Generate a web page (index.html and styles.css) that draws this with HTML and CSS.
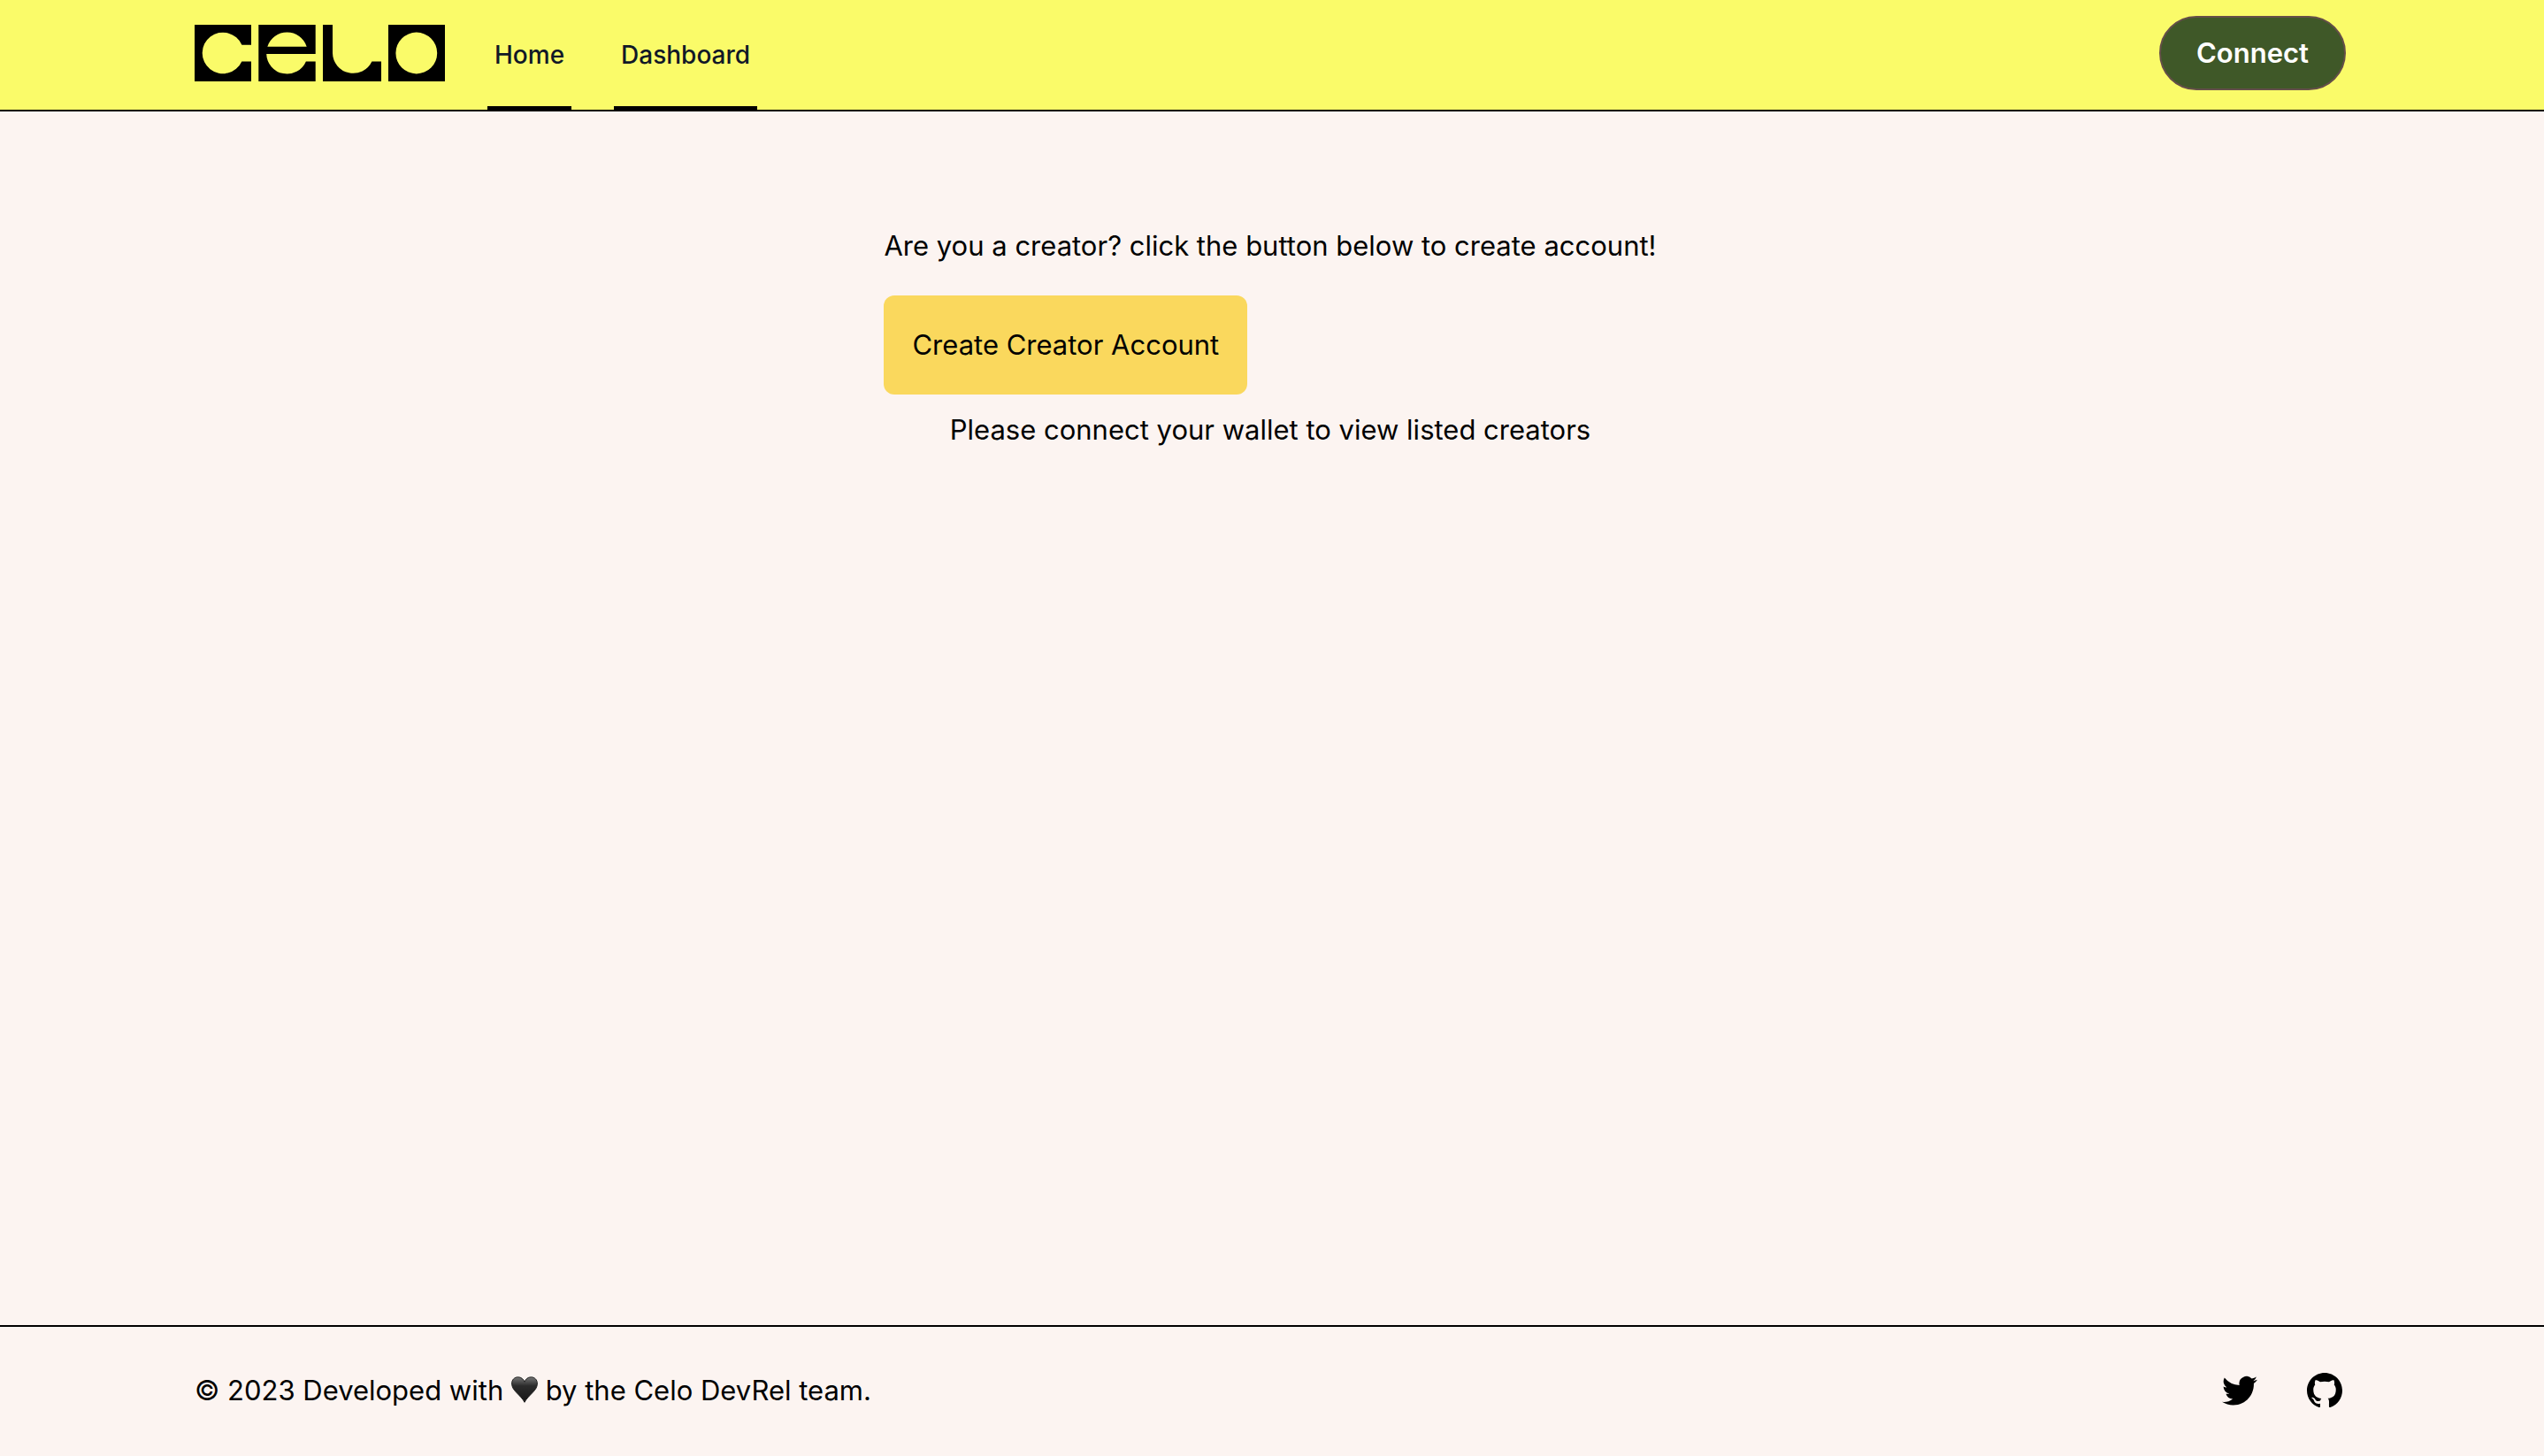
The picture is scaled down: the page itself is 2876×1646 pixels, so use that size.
FILE: index.html
```html
<!DOCTYPE html>
<html lang="en">
<head>
<meta charset="utf-8">
<meta name="viewport" content="width=device-width, initial-scale=1">
<title>Celo Creators</title>
<link rel="stylesheet" href="styles.css">
</head>
<body>
<header class="header">
  <a class="logo" href="#" aria-label="Celo">
    <svg class="logo-mark" viewBox="0 0 283 64" fill="currentColor" aria-hidden="true">
      <path d="M0 0H64V22.7H53.4A23.3 23.3 0 1 0 53.3 41.4H64V64H0Z"/>
      <path fill-rule="evenodd" d="M72.3 0H136.7V33H81.2A23.3 23.3 0 0 0 125.9 41.4H136.7V64H72.3ZM82.3 24.8H126.7A23.3 23.3 0 0 0 82.3 24.8Z"/>
      <path d="M145 0H156V32A23.3 23.3 0 0 0 200.4 41.4H211V64H145Z"/>
      <path fill-rule="evenodd" d="M219 0H283V64H219ZM227.4 32A23.4 23.4 0 1 0 274.2 32A23.4 23.4 0 1 0 227.4 32Z"/>
    </svg>
  </a>
  <nav class="nav">
    <a class="nav-link" href="#">Home</a>
    <a class="nav-link" href="#">Dashboard</a>
  </nav>
  <button class="connect" type="button">Connect</button>
</header>
<main class="main">
  <div class="intro">
    <p>Are you a creator? click the button below to create account!</p>
    <button class="create" type="button">Create Creator Account</button>
  </div>
  <p>Please connect your wallet to view listed creators</p>
</main>
<footer class="footer">
  <p class="credit">© 2023 Developed with <svg class="heart" viewBox="0 0 30 30" role="img" aria-label="love">
      <defs><linearGradient id="shine" x1="0" y1="0" x2="0" y2="1"><stop offset="0" stop-color="#777"/><stop offset=".35" stop-color="#2b2b2b"/><stop offset="1" stop-color="#161616"/></linearGradient></defs>
      <path fill="url(#shine)" stroke="#222" stroke-width="1" d="M15 29.3C13.200 25.500 9.500 22 6 18.400C2.600 14.900 .6 12 .6 8C.6 3.800 3.700 .8 7.600 .8C11.200 .8 13.800 3 15 6.300C16.200 3 18.800 .8 22.400 .8C26.300 .8 29.400 3.800 29.400 8C29.400 12 27.400 14.900 24 18.400C20.500 22 16.800 25.500 15 29.300Z"/>
    </svg> by the Celo DevRel team.</p>
  <div class="social">
    <a class="social-link" href="#" aria-label="Twitter">
      <svg viewBox="0 0 24 24" fill="currentColor" aria-hidden="true"><path d="M8.29 20.251c7.547 0 11.675-6.253 11.675-11.675 0-.178 0-.355-.012-.53A8.348 8.348 0 0022 5.92a8.19 8.19 0 01-2.357.646 4.118 4.118 0 001.804-2.27 8.224 8.224 0 01-2.605.996 4.107 4.107 0 00-6.993 3.743 11.65 11.65 0 01-8.457-4.287 4.106 4.106 0 001.27 5.477A4.072 4.072 0 012.800 9.713v.052a4.105 4.105 0 003.292 4.022 4.095 4.095 0 01-1.853.07 4.108 4.108 0 003.834 2.850A8.233 8.233 0 012 18.407a11.616 11.616 0 006.290 1.840"/></svg>
    </a>
    <a class="social-link" href="#" aria-label="GitHub">
      <svg viewBox="0 0 24 24" fill="currentColor" aria-hidden="true"><path fill-rule="evenodd" clip-rule="evenodd" d="M12 2C6.477 2 2 6.484 2 12.017c0 4.425 2.865 8.180 6.839 9.504.5.092.682-.217.682-.483 0-.237-.008-.868-.013-1.703-2.782.605-3.369-1.343-3.369-1.343-.454-1.158-1.110-1.466-1.110-1.466-.908-.620.069-.608.069-.608 1.003.070 1.531 1.032 1.531 1.032.892 1.530 2.341 1.088 2.910.832.092-.647.350-1.088.636-1.338-2.220-.253-4.555-1.113-4.555-4.951 0-1.093.390-1.988 1.029-2.688-.103-.253-.446-1.272.098-2.650 0 0 .840-.270 2.750 1.026A9.564 9.564 0 0112 6.844c.850.004 1.705.115 2.504.337 1.909-1.296 2.747-1.027 2.747-1.027.546 1.379.202 2.398.100 2.651.640.700 1.028 1.595 1.028 2.688 0 3.848-2.339 4.695-4.566 4.943.359.309.678.920.678 1.855 0 1.338-.012 2.419-.012 2.747 0 .268.180.580.688.482A10.019 10.019 0 0022 12.017C22 6.484 17.522 2 12 2z"/></svg>
    </a>
  </div>
</footer>
</body>
</html>
```
FILE: styles.css
```css
*,
*::before,
*::after {
  box-sizing: border-box;
}

body {
  margin: 0;
  min-height: 100vh;
  display: flex;
  flex-direction: column;
  background: #fcf4f1;
  color: #000;
  font-family: Inter, "Liberation Sans", sans-serif;
  font-size: 31px;
  line-height: 48px;
}

p {
  margin: 0;
}

button {
  font: inherit;
  cursor: pointer;
}

a {
  color: inherit;
  text-decoration: none;
}

.header,
.footer {
  display: flex;
  padding-left: 220px;
  padding-right: 224px;
}

.header {
  height: 126px;
  background: #fafb69;
  border-bottom: 2px solid #000;
}

.logo {
  padding-top: 28px;
}

.logo-mark {
  display: block;
  width: 283px;
  height: 64px;
}

.nav {
  display: flex;
  gap: 48px;
  margin-left: 48px;
}

.nav-link {
  display: flex;
  align-items: center;
  padding: 4px 8px 0;
  border-bottom: 4px solid #000;
  color: #111827;
  font-size: 28px;
  font-weight: 500;
}

.connect {
  margin: 18px 0 0 auto;
  height: 84px;
  padding: 0 40px;
  border: 2px solid #644f48;
  border-radius: 42px;
  background: #3f5828;
  color: #fff;
  font-weight: 600;
}

.main {
  flex: 1;
  display: flex;
  flex-direction: column;
  align-items: center;
  gap: 16px;
  padding: 128px 4px 64px 0;
}

.intro {
  display: flex;
  flex-direction: column;
  align-items: flex-start;
  gap: 32px;
}

.create {
  padding: 32px;
  border: 0;
  border-radius: 12px;
  background: #fad85d;
  color: #000;
}

.footer {
  align-items: center;
  justify-content: space-between;
  padding-top: 48px;
  padding-bottom: 50px;
  border-top: 2px solid #000;
}

.heart {
  width: 30px;
  height: 30px;
  vertical-align: -3px;
}

.social {
  display: flex;
  gap: 48px;
}

.social-link {
  width: 48px;
  height: 48px;
}

.social-link svg {
  display: block;
}
```
